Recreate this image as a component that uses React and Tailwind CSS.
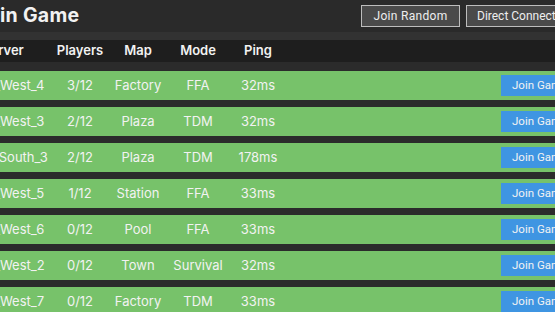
import React from "react";

const rows = [
  ["US_West_4", "3/12", "Factory", "FFA", "32ms"],
  ["US_West_3", "2/12", "Plaza", "TDM", "32ms"],
  ["EU_South_3", "2/12", "Plaza", "TDM", "178ms"],
  ["US_West_5", "1/12", "Station", "FFA", "33ms"],
  ["US_West_6", "0/12", "Pool", "FFA", "33ms"],
  ["US_West_2", "0/12", "Town", "Survival", "32ms"],
  ["US_West_7", "0/12", "Factory", "TDM", "33ms"],
];

const font = { fontFamily: "Inter, 'Noto Sans', sans-serif" };
const btnFont = { fontFamily: "Roboto, 'Noto Sans', sans-serif" };

export default function App() {
  return (
    <div className="w-[555px] h-[312px] overflow-hidden bg-[#2a2a2a] text-[#f2f2f2]" style={font}>
      <div className="w-[640px] ml-[-40px]">
        <div className="h-[32px] flex items-center pl-[16px] pr-[28px]">
          <div className="text-[19.5px] font-bold tracking-[0.3px]">Join Game</div>
          <div className="ml-auto flex gap-[6px]" style={btnFont}>
            <button className="h-[22px] w-[99px] border border-[#bdbdbd] bg-[#4a4a4a] text-[12px] text-[#eeeeee] tracking-[0.3px]">Join Random</button>
            <button className="h-[22px] w-[106px] border border-[#bdbdbd] bg-[#4a4a4a] text-[12px] text-[#eeeeee] text-left pl-[10px] whitespace-nowrap">Direct Connect</button>
          </div>
        </div>
        <div className="h-[8px] bg-[#323232]" />
        <div className="h-[22px] bg-[#1e1e1e] grid grid-cols-[90px_60px_56px_64px_56px_1fr] items-center text-[13px] font-semibold">
          <div className="pl-[22px]">Server</div>
          <div className="text-center">Players</div>
          <div className="text-center">Map</div>
          <div className="text-center">Mode</div>
          <div className="text-center">Ping</div>
          <div />
        </div>
        <div className="bg-[#2b2b2b] pt-[9px] flex flex-col gap-[7px]">
          {rows.map((r, i) => (
            <div key={i} className="h-[29px] bg-[#77c26a] grid grid-cols-[90px_60px_56px_64px_56px_1fr] items-center text-[13px]">
              <div className="pl-[16px] whitespace-nowrap">{r[0]}</div>
              <div className="text-center">{r[1]}</div>
              <div className="text-center">{r[2]}</div>
              <div className="text-center">{r[3]}</div>
              <div className="text-center">{r[4]}</div>
              <div className="flex justify-end pr-[8px]">
                <button style={btnFont} className="h-[21px] w-[91px] bg-[#3f95e2] text-[11.5px] text-[#f2f2f2] text-left pl-[11px] whitespace-nowrap">Join Game</button>
              </div>
            </div>
          ))}
        </div>
      </div>
    </div>
  );
}
